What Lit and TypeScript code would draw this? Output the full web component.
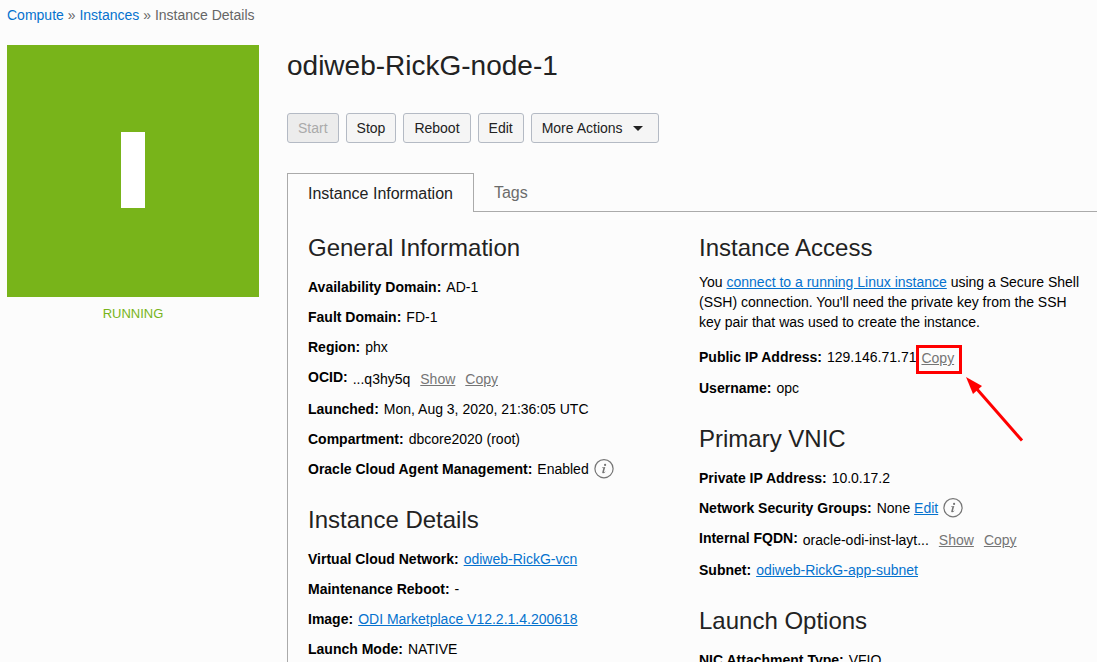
import { LitElement, html, css, svg } from "lit";
import { customElement, property, state } from "lit/decorators.js";

@customElement("info-icon")
class InfoIcon extends LitElement {
  static styles = css`
    :host {
      display: block;
      width: 20px;
      height: 20px;
    }
    .icon {
      display: block;
      fill: none;
      stroke: #757575;
    }
    .glyph {
      fill: #757575;
      stroke: none;
    }
  `;

  render() {
    return html`<svg class="icon" width="20" height="20" viewBox="0 0 20 20" role="img" aria-label="More information">
      <circle cx="10" cy="9.7" r="9.1" stroke-width="1.2" />
      <circle class="glyph" cx="11.1" cy="5.9" r="1.1" />
      <path class="glyph" d="M8 8.5L11.3 8L9.9 12.9Q9.8 13.5 11.3 12.4L11.5 12.8Q10 14.4 8.9 14.3Q7.9 14.1 8.3 12.9L9.3 9.3Q9.4 8.9 8 9Z" />
    </svg>`;
  }
}

@customElement("detail-row")
class DetailRow extends LitElement {
  @property() label = "";

  static styles = css`
    :host {
      display: flex;
      align-items: flex-start;
      gap: 5px;
      margin-bottom: 10px;
      line-height: 20px;
      white-space: nowrap;
    }
    .label {
      font-weight: bold;
    }
  `;

  render() {
    return html`<span class="label">${this.label}:</span><slot></slot>`;
  }
}

@customElement("app-root")
class AppRoot extends LitElement {
  @state() private tab = "info";

  static styles = css`
    :host {
      display: block;
      box-sizing: border-box;
      min-height: 100vh;
      padding: 5px 0 0 7px;
      background: #fcfcfc;
      color: #000;
      font: 14px/20px "Liberation Sans", Arial, sans-serif;
    }
    a {
      color: #0572ce;
    }
    button {
      font: inherit;
      cursor: pointer;
    }
    .crumbs {
      color: #666;
    }
    .crumbs a {
      text-decoration: none;
    }
    .page {
      display: grid;
      grid-template-columns: 252px minmax(0, 1fr);
      column-gap: 28px;
      align-items: start;
      margin-top: 20px;
    }
    .tile {
      display: block;
      width: 100%;
      aspect-ratio: 1;
      background: #78b41a;
    }
    .status {
      margin-top: 7px;
      text-align: center;
      font-size: 13px;
      color: #78b41a;
    }
    .title {
      margin: 0;
      font-size: 28px;
      line-height: 42px;
      font-weight: normal;
      color: #222;
    }
    .actions {
      display: flex;
      gap: 7px;
      margin: 26px 0 30px;
    }
    .action {
      display: flex;
      align-items: center;
      gap: 10px;
      height: 30px;
      padding: 0 10px;
      border: 1px solid #b4bac4;
      border-radius: 3px;
      background: #f5f5f5;
      color: #222;
    }
    .action:disabled {
      background: #ececec;
      color: #aaa;
      cursor: default;
    }
    .menu {
      padding-right: 15px;
    }
    .tabs {
      display: flex;
      align-items: stretch;
      height: 38px;
      border-bottom: 1px solid #aaa;
    }
    .tab {
      padding: 2px 20px 0;
      border: 0;
      background: none;
      color: #6b6b6b;
      font-size: 16px;
    }
    .tab.active {
      margin-bottom: -1px;
      border: 1px solid #aaa;
      border-bottom: 0;
      background: #fcfcfc;
      color: #222;
    }
    .panel {
      display: grid;
      grid-template-columns: repeat(2, minmax(0, 1fr));
      padding: 5px 7px 0 20px;
      border-left: 1px solid #aaa;
    }
    .heading {
      margin: 16px 0 9px;
      font-size: 24px;
      line-height: 30px;
      font-weight: normal;
      color: #222;
    }
    .rows {
      display: flow-root;
      padding-top: 5px;
    }
    .intro {
      margin: 0 0 10px;
    }
    .lowered {
      display: flex;
      gap: 10px;
      padding-top: 2px;
    }
    .text-button {
      padding: 0;
      border: 0;
      background: none;
      color: #757575;
      text-decoration: underline;
    }
    .callout {
      position: relative;
      display: flex;
      padding-top: 1px;
    }
    .frame {
      position: absolute;
      inset: -2px -8px -6px -5px;
      border: 3px solid #f00;
      pointer-events: none;
    }
    .arrow {
      position: absolute;
      left: 44px;
      top: 28px;
      fill: #f00;
      stroke: #f00;
      pointer-events: none;
    }
  `;

  private textButton(label: string) {
    return html`<button class="text-button" type="button">${label}</button>`;
  }

  private tabButton(id: string, label: string) {
    const on = this.tab === id;
    return html`<button
      class="tab ${on ? "active" : ""}"
      type="button"
      role="tab"
      aria-selected=${on}
      @click=${() => (this.tab = id)}
    >${label}</button>`;
  }

  render() {
    return html`
      <nav class="crumbs" aria-label="Breadcrumb">
        <a href="#compute">Compute</a> » <a href="#instances">Instances</a> » <span>Instance Details</span>
      </nav>
      <div class="page">
        <aside>
          <svg class="tile" viewBox="0 0 252 252" role="img" aria-label="Instance">
            ${svg`<rect x="114" y="87" width="24" height="76" fill="#fff" />`}
          </svg>
          <div class="status">RUNNING</div>
        </aside>
        <main>
          <h1 class="title">odiweb-RickG-node-1</h1>
          <div class="actions">
            <button class="action" type="button" disabled>Start</button>
            <button class="action" type="button">Stop</button>
            <button class="action" type="button">Reboot</button>
            <button class="action" type="button">Edit</button>
            <button class="action menu" type="button" aria-haspopup="menu">
              More Actions
              <svg width="10" height="5" viewBox="0 0 10 5" aria-hidden="true"><path d="M0 0H10L5 5Z" fill="#222" /></svg>
            </button>
          </div>
          <div class="tabs" role="tablist">
            ${this.tabButton("info", "Instance Information")} ${this.tabButton("tags", "Tags")}
          </div>
          <div class="panel" role="tabpanel">
            <div>
              <h2 class="heading">General Information</h2>
              <div class="rows">
                <detail-row label="Availability Domain">AD-1</detail-row>
                <detail-row label="Fault Domain">FD-1</detail-row>
                <detail-row label="Region">phx</detail-row>
                <detail-row label="OCID">
                  <span class="lowered"><span>...q3hy5q</span>${this.textButton("Show")}${this.textButton("Copy")}</span>
                </detail-row>
                <detail-row label="Launched">Mon, Aug 3, 2020, 21:36:05 UTC</detail-row>
                <detail-row label="Compartment">dbcore2020 (root)</detail-row>
                <detail-row label="Oracle Cloud Agent Management">Enabled<info-icon></info-icon></detail-row>
              </div>
              <h2 class="heading">Instance Details</h2>
              <div class="rows">
                <detail-row label="Virtual Cloud Network"><a href="#vcn">odiweb-RickG-vcn</a></detail-row>
                <detail-row label="Maintenance Reboot">-</detail-row>
                <detail-row label="Image"><a href="#image">ODI Marketplace V12.2.1.4.200618</a></detail-row>
                <detail-row label="Launch Mode">NATIVE</detail-row>
              </div>
            </div>
            <div>
              <h2 class="heading">Instance Access</h2>
              <p class="intro">
                You <a href="#connect">connect to a running Linux instance</a> using a Secure Shell (SSH) connection.
                You'll need the private key from the SSH key pair that was used to create the instance.
              </p>
              <div class="rows">
                <detail-row label="Public IP Address">
                  <span>129.146.71.71</span>
                  <span class="callout">
                    ${this.textButton("Copy")}
                    <span class="frame"></span>
                    <svg class="arrow" width="60" height="70" viewBox="0 0 60 70" aria-hidden="true">
                      <path d="M1 2L17 11L8 19Z" stroke="none" />
                      <path d="M11 13L57 65.5" stroke-width="3" />
                    </svg>
                  </span>
                </detail-row>
                <detail-row label="Username">opc</detail-row>
              </div>
              <h2 class="heading">Primary VNIC</h2>
              <div class="rows">
                <detail-row label="Private IP Address">10.0.17.2</detail-row>
                <detail-row label="Network Security Groups">
                  <span>None <a href="#nsg">Edit</a></span><info-icon></info-icon>
                </detail-row>
                <detail-row label="Internal FQDN">
                  <span class="lowered"><span>oracle-odi-inst-layt...</span>${this.textButton("Show")}${this.textButton("Copy")}</span>
                </detail-row>
                <detail-row label="Subnet"><a href="#subnet">odiweb-RickG-app-subnet</a></detail-row>
              </div>
              <h2 class="heading">Launch Options</h2>
              <div class="rows">
                <detail-row label="NIC Attachment Type">VFIO</detail-row>
              </div>
            </div>
          </div>
        </main>
      </div>
    `;
  }
}
